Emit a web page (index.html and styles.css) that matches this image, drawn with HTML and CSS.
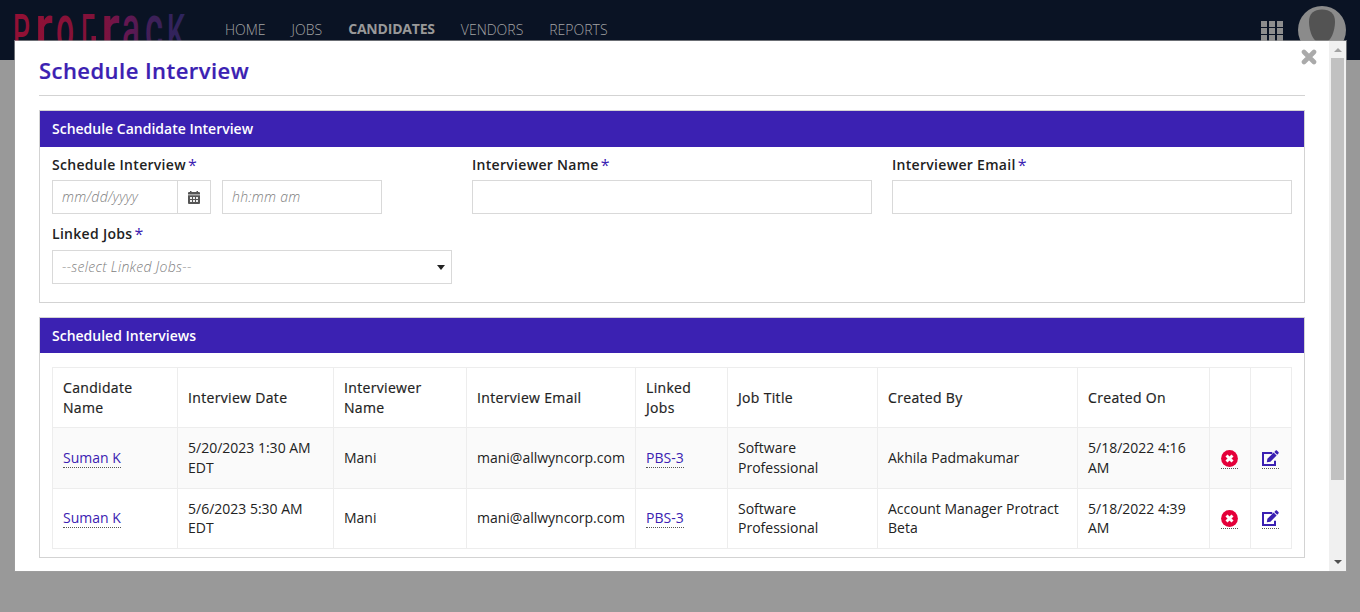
FILE: index.html
```html
<!DOCTYPE html>
<html lang="en">
<head>
<meta charset="utf-8">
<title>Schedule Interview</title>
<link rel="stylesheet" href="styles.css">
</head>
<body>
<svg class="sprite" aria-hidden="true">
  <symbol id="remove" viewBox="0 0 17 17"><circle cx="8.5" cy="8.5" r="8.4" fill="#e4003a"/><path d="M5.500 5.500l6 6M11.500 5.500l-6 6" stroke="#fff" stroke-width="2.9"/></symbol>
  <symbol id="edit" viewBox="0 0 17 17"><path d="M10.300 3H1v12h12v-4.200" fill="none" stroke="#3b21b2" stroke-width="2"/><path d="M4.800 12.300l.6-3.500 6.200-6.200 3 3-6.200 6.200zM12.300 1.900l1.200-1.200c.5-.5 1.100-.5 1.600 0l1.300 1.300c.5.500.5 1.100 0 1.600l-1.200 1.200z" fill="#3b21b2"/></symbol>
</svg>
<header class="topbar">
  <svg class="logo" width="180" height="42" viewBox="0 0 180 42">
    <defs><linearGradient id="brand" gradientUnits="userSpaceOnUse" x1="0" y1="0" x2="180" y2="0"><stop offset="0" stop-color="#941034"/><stop offset=".5" stop-color="#7f123b"/><stop offset=".62" stop-color="#681650"/><stop offset=".78" stop-color="#3d2058"/><stop offset="1" stop-color="#29265f"/></linearGradient></defs>
    <g fill="url(#brand)" class="logo-text">
      <text x="1" y="38" font-size="50" textLength="17" lengthAdjust="spacingAndGlyphs">P</text>
      <text x="23" y="39" font-size="66" textLength="18" lengthAdjust="spacingAndGlyphs">r</text>
      <text x="44" y="38" font-size="64" textLength="18" lengthAdjust="spacingAndGlyphs">o</text>
      <text x="69" y="38" font-size="50" textLength="14" lengthAdjust="spacingAndGlyphs">Γ</text>
      <text x="89" y="39" font-size="66" textLength="19" lengthAdjust="spacingAndGlyphs">r</text>
      <text x="110" y="38" font-size="64" textLength="18" lengthAdjust="spacingAndGlyphs">a</text>
      <text x="133" y="38" font-size="64" textLength="18" lengthAdjust="spacingAndGlyphs">c</text>
      <text x="155" y="38" font-size="50" textLength="18" lengthAdjust="spacingAndGlyphs">K</text>
      <path d="M79.500 24h4.500v6h-4.500z"/>
    </g>
  </svg>
  <nav class="nav"><a>HOME</a><a>JOBS</a><a class="current">CANDIDATES</a><a>VENDORS</a><a>REPORTS</a></nav>
  <div class="apps"><i></i><i></i><i></i><i></i><i></i><i></i><i></i><i></i><i></i></div>
  <svg class="avatar" width="48" height="48" viewBox="0 0 48 48"><circle cx="24" cy="24" r="24" fill="#8b8b8b"/><path d="M24 3.500c8 0 13 4 13 12 0 9-4 22-13 22s-13-13-13-22c0-8 5-12 13-12z" fill="#535353"/></svg>
</header>
<div class="modal">
  <main class="modal-body">
    <h1>Schedule Interview</h1>
    <svg class="close" width="16" height="16" viewBox="0 0 16 16"><path d="M3 3l10 10M13 3L3 13" stroke="#aaa" stroke-width="4.6" stroke-linecap="round"/></svg>
    <section class="panel form-panel">
      <h2>Schedule Candidate Interview</h2>
      <div class="fields">
        <div class="field">
          <label>Schedule Interview<b>*</b></label>
          <div class="when">
            <div class="input date">mm/dd/yyyy</div>
            <div class="calendar"><svg width="12" height="13" viewBox="0 0 12 13"><path d="M0 2.200Q0 1 1 1h1V0h1.500v1h5V0H10v1h1q1 0 1 1.200V3.500H0z" fill="#555"/><path d="M0 4.300h12V12q0 1-1 1H1q-1 0-1-1z" fill="#555"/><path d="M2 6h2v2H2zM5 6h2v2H5zM8 6h2v2H8zM2 9h2v2H2zM5 9h2v2H5zM8 9h2v2H8z" fill="#eee"/></svg></div>
            <div class="input time">hh:mm am</div>
          </div>
        </div>
        <div class="field"><label>Interviewer Name<b>*</b></label><div class="input"></div></div>
        <div class="field"><label>Interviewer Email<b>*</b></label><div class="input"></div></div>
        <div class="field"><label>Linked Jobs<b>*</b></label><div class="input select">--select Linked Jobs--</div></div>
      </div>
    </section>
    <section class="panel list-panel">
      <h2>Scheduled Interviews</h2>
      <table>
        <colgroup><col class="c1"><col class="c2"><col class="c3"><col class="c4"><col class="c5"><col class="c6"><col class="c7"><col class="c8"><col class="c9"><col class="c9"></colgroup>
        <thead><tr><th>Candidate Name</th><th>Interview Date</th><th>Interviewer Name</th><th>Interview Email</th><th>Linked Jobs</th><th>Job Title</th><th>Created By</th><th>Created On</th><th></th><th></th></tr></thead>
        <tbody>
          <tr class="shaded"><td><a>Suman K</a></td><td>5/20/2023 1:30 AM EDT</td><td>Mani</td><td>mani@allwyncorp.com</td><td><a>PBS-3</a></td><td>Software Professional</td><td>Akhila Padmakumar</td><td>5/18/2022 4:16 AM</td><td class="tool"><a class="action"><svg width="17" height="17"><use href="#remove"/></svg></a></td><td class="tool"><a class="action"><svg width="17" height="17"><use href="#edit"/></svg></a></td></tr>
          <tr class="last"><td><a>Suman K</a></td><td>5/6/2023 5:30 AM EDT</td><td>Mani</td><td>mani@allwyncorp.com</td><td><a>PBS-3</a></td><td>Software Professional</td><td>Account Manager Protract Beta</td><td>5/18/2022 4:39 AM</td><td class="tool"><a class="action"><svg width="17" height="17"><use href="#remove"/></svg></a></td><td class="tool"><a class="action"><svg width="17" height="17"><use href="#edit"/></svg></a></td></tr>
        </tbody>
      </table>
    </section>
  </main>
  <div class="scrollbar"><i class="up"></i><i class="thumb"></i><i class="down"></i></div>
</div>
</body>
</html>
```

FILE: styles.css
```css
* { box-sizing: border-box; }
body { margin: 0; height: 612px; overflow: hidden; background: #999; color: #222; font: 14px/20px "Open Sans", "Noto Sans", sans-serif; }
.sprite { display: none; }
.topbar { display: flex; align-items: flex-start; height: 60px; padding: 0 14px 0 12px; background: #0a1324; }
.logo { margin-top: 12px; overflow: hidden; flex: none; }
.logo-text { font-family: "Roboto", "Liberation Sans", sans-serif; font-weight: 500; }
.nav { display: flex; gap: 26px; margin: 20px 0 0 33px; color: #a4a4a4; font-weight: 300; }
.nav .current { color: #999; font-weight: 700; letter-spacing: -.2px; position: relative; top: -1px; }
.apps { display: grid; grid-template-columns: repeat(3, 6px); grid-auto-rows: 6px; column-gap: 2px; row-gap: 1px; margin: 21px 15px 0 auto; }
.apps i { background: #8d8d8d; }
.avatar { margin-top: 6px; }

.modal { position: absolute; left: 14px; top: 40px; width: 1333px; height: 532px; display: flex; background: #fff; background-clip: padding-box; border: 1px solid rgba(160,160,160,.65); }
.modal-body { position: relative; flex: 1; padding: 14px 24px 0; }
h1 { margin: 0 0 14px; height: 41px; border-bottom: 1px solid #d3d3d3; color: #3b21b2; font-size: 22px; line-height: 31px; font-weight: 600; letter-spacing: .45px; -webkit-text-stroke: .2px #3b21b2; }
.close { position: absolute; right: 12px; top: 8px; }
.panel { border: 1px solid #d3d3d3; margin-bottom: 14px; }
h2 { margin: 0; height: 36px; padding: 0 12px; background: #3b21b2; color: #fff; font-size: 14px; line-height: 36px; font-weight: 600; }
.form-panel { height: 193px; }
.fields { display: grid; grid-template-columns: repeat(3, 400px); column-gap: 20px; row-gap: 10px; padding: 8px 12px 0; }
label { display: block; height: 25px; line-height: 20px; font-weight: 600; letter-spacing: .3px; }
.field:nth-child(4) label { height: 26px; }
label b { margin-left: 2px; color: #3b21b2; font-weight: 400; font-size: 16px; line-height: 15px; position: relative; top: 1px; }
.input { height: 34px; border: 1px solid #d9d9d9; padding: 0 9px; line-height: 32px; color: #808080; font-style: italic; font-weight: 300; letter-spacing: .3px; }
.when { display: flex; }
.date { width: 126px; }
.calendar { width: 34px; height: 34px; margin-left: -1px; border: 1px solid #d9d9d9; display: grid; place-items: center; }
.time { width: 160px; margin-left: 11px; }
.select { display: flex; justify-content: space-between; align-items: center; padding-right: 6px; }
.select::after { content: ""; border: 4.5px solid transparent; border-top: 5px solid #222; border-bottom: 0; }

.list-panel { height: 241px; }
.list-panel h2 { height: 35px; line-height: 35px; }
table { width: 1240px; margin: 14px 12px 0; table-layout: fixed; border-collapse: collapse; }
th, td { border: 1px solid #ededed; padding: 0 10px; text-align: left; vertical-align: middle; line-height: 20px; }
th { height: 60px; font-weight: 400; letter-spacing: .33px; -webkit-text-stroke: .2px #222; }
td { height: 60px; }
.shaded { background: #fafafa; }
.shaded td { height: 61px; }
.last td { line-height: 19px; padding-bottom: 2px; }
.last .tool { padding-bottom: 0; }
.c1 { width: 125px; } .c2 { width: 156px; } .c3 { width: 133px; } .c4 { width: 169px; } .c5 { width: 92px; } .c6 { width: 150px; } .c7 { width: 200px; } .c8 { width: 132px; } .c9 { width: 41px; }
td a { display: inline-block; height: 20px; border-bottom: 1px dotted #555; color: #3b21b2; }
td .action { display: block; width: 17px; height: 19px; margin: 2px 0 0 1px; }
.action svg { display: block; }

.scrollbar { width: 17px; display: flex; flex-direction: column; align-items: center; background: #f0f0f0; }
.up { margin: 7px 0 6px; border: 4px solid transparent; border-bottom-color: #a3a3a3; border-top: 0; }
.thumb { width: 13px; height: 422px; background: #c1c1c1; }
.down { margin-top: 80px; border: 4px solid transparent; border-top-color: #505050; border-bottom: 0; }
```
